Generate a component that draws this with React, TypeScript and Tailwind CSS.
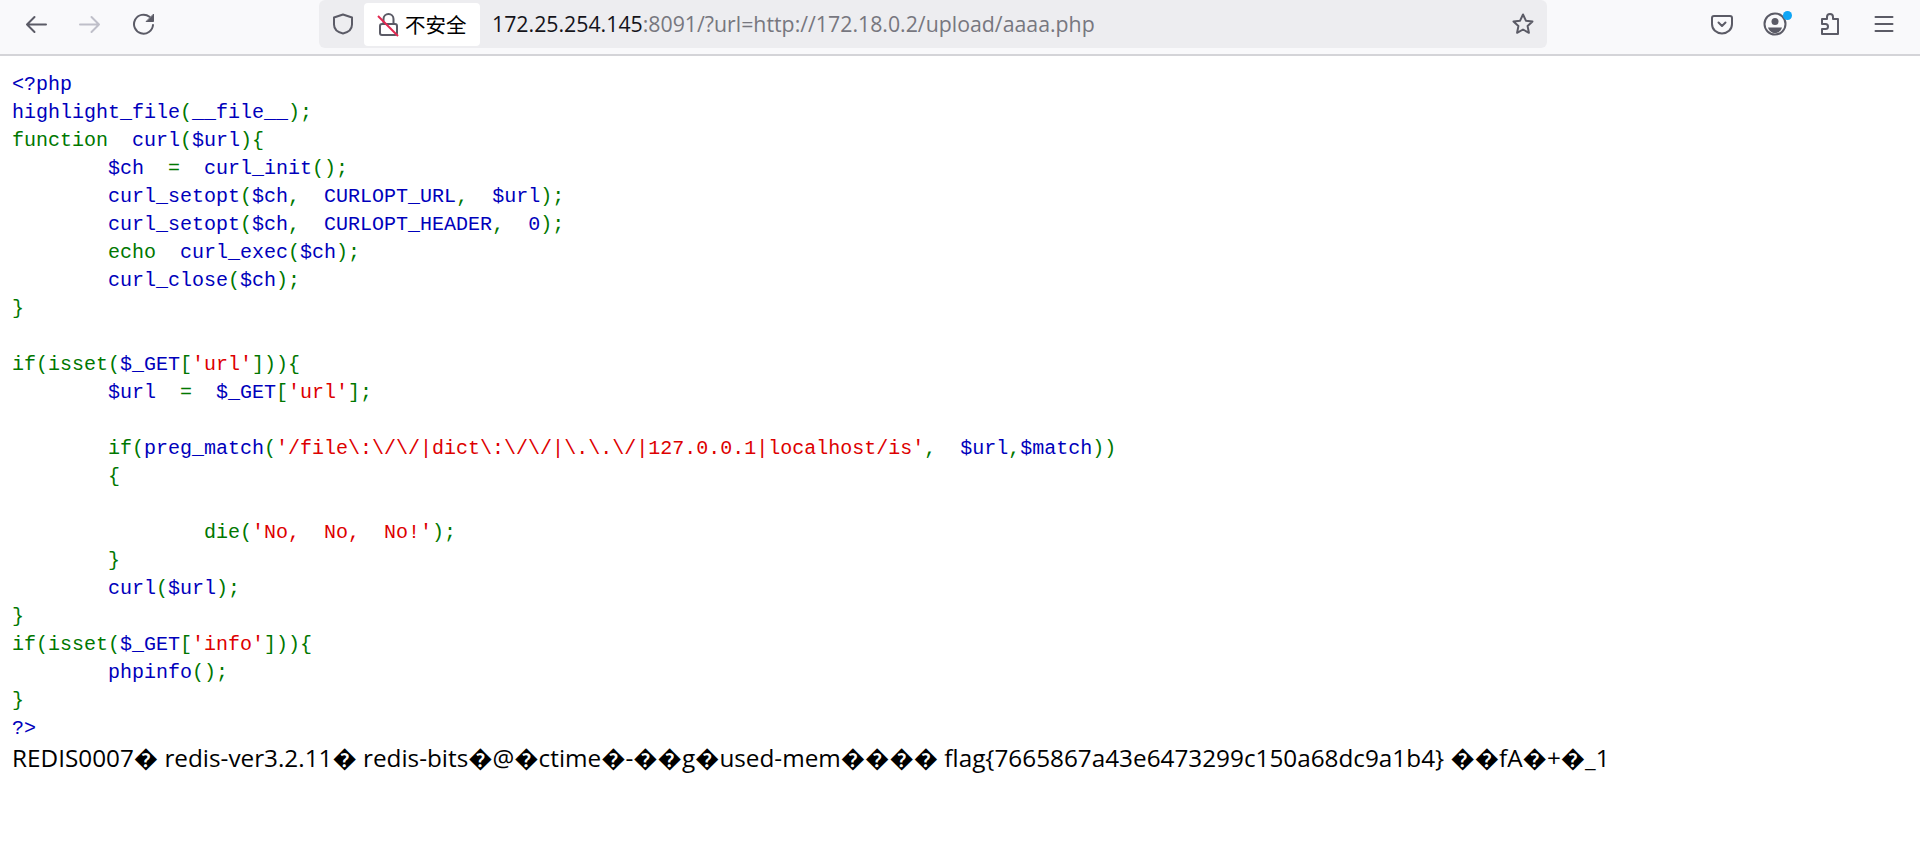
import React from 'react';

type Tone = 'b' | 'g' | 'r';
type Token = [Tone, string];

const toneClass: Record<Tone, string> = {
  b: 'text-[#0000bb]',
  g: 'text-[#007700]',
  r: 'text-[#dd0000]',
};

const tab = '\u00a0\u00a0\u00a0\u00a0\u00a0\u00a0\u00a0\u00a0';
const sp = '\u00a0\u00a0';

const code: Token[][] = [
  [['b', '<?php']],
  [['b', 'highlight_file'], ['g', '('], ['b', '__file__'], ['g', ');']],
  [['g', 'function' + sp], ['b', 'curl'], ['g', '('], ['b', '$url'], ['g', '){']],
  [['g', tab], ['b', '$ch' + sp], ['g', '=' + sp], ['b', 'curl_init'], ['g', '();']],
  [['g', tab], ['b', 'curl_setopt'], ['g', '('], ['b', '$ch'], ['g', ',' + sp], ['b', 'CURLOPT_URL'], ['g', ',' + sp], ['b', '$url'], ['g', ');']],
  [['g', tab], ['b', 'curl_setopt'], ['g', '('], ['b', '$ch'], ['g', ',' + sp], ['b', 'CURLOPT_HEADER'], ['g', ',' + sp], ['b', '0'], ['g', ');']],
  [['g', tab + 'echo' + sp], ['b', 'curl_exec'], ['g', '('], ['b', '$ch'], ['g', ');']],
  [['g', tab], ['b', 'curl_close'], ['g', '('], ['b', '$ch'], ['g', ');']],
  [['g', '}']],
  [],
  [['g', 'if(isset('], ['b', '$_GET'], ['g', '['], ['r', "'url'"], ['g', '])){']],
  [['g', tab], ['b', '$url' + sp], ['g', '=' + sp], ['b', '$_GET'], ['g', '['], ['r', "'url'"], ['g', '];']],
  [],
  [['g', tab + 'if('], ['b', 'preg_match'], ['g', '('], ['r', "'/file\\:\\/\\/|dict\\:\\/\\/|\\.\\.\\/|127.0.0.1|localhost/is'"], ['g', ',' + sp], ['b', '$url'], ['g', ','], ['b', '$match'], ['g', '))']],
  [['g', tab + '{']],
  [],
  [['g', tab + tab + 'die('], ['r', "'No," + sp + 'No,' + sp + "No!'"], ['g', ');']],
  [['g', tab + '}']],
  [['g', tab], ['b', 'curl'], ['g', '('], ['b', '$url'], ['g', ');']],
  [['g', '}']],
  [['g', 'if(isset('], ['b', '$_GET'], ['g', '['], ['r', "'info'"], ['g', '])){']],
  [['g', tab], ['b', 'phpinfo'], ['g', '();']],
  [['g', '}']],
  [['b', '?>']],
];

function Icon({ className, children }: { className: string; children: React.ReactNode }) {
  return (
    <svg viewBox="0 0 24 24" fill="none" stroke="currentColor" strokeWidth="2" strokeLinecap="round" strokeLinejoin="round" className={className}>
      {children}
    </svg>
  );
}

export default function App() {
  return (
    <div className="min-h-[852px] bg-white">
      {/* browser toolbar */}
      <div className="flex h-[56px] items-center border-b-2 border-[#d4d4d8] bg-[#f9f9fb] pb-[6px] pl-[24px] text-[#5b5b66]">
        <Icon className="h-6 w-6">
          <path d="M22 12.500H3M10.500 5l-7.500 7.500 7.500 7.500" />
        </Icon>
        <Icon className="ml-[30px] h-6 w-6 text-[#bfbfc9]">
          <path d="M2 12.500h19M13.500 5l7.500 7.500-7.500 7.500" />
        </Icon>
        <Icon className="ml-[30px] h-6 w-6">
          <path d="M21 13a9.500 9.500 0 1 1-3.500-8.200" />
          <path d="M21.500 2.500v7h-7z" fill="currentColor" strokeWidth="1" />
        </Icon>

        <div className="ml-[163px] flex h-[48px] w-[1228px] items-center rounded-[6px] bg-[#ededf0] pl-[12px] pr-[12px]">
          <Icon className="h-6 w-6">
            <path d="M12 2.500 3 5.500v7c0 4.500 4 7.800 9 9 5-1.200 9-4.500 9-9v-7z" />
          </Icon>
          <div className="ml-[9px] flex h-[43px] w-[116px] items-center rounded-[4px] bg-white pl-[13px]">
            <svg viewBox="0 0 24 24" fill="none" className="h-6 w-6 shrink-0 overflow-visible">
              <path d="M6.500 12V7a5 5 0 0 1 10 0v5" stroke="#5b5b66" strokeWidth="2" />
              <rect x="3" y="12" width="17" height="11" rx="2" stroke="#5b5b66" strokeWidth="2" />
              <path d="M1 4l20 20" stroke="#e22850" strokeWidth="2" />
            </svg>
            <span className="ml-[4px] font-['Noto_Sans_CJK_SC',sans-serif] text-[20.500px] leading-none text-black">不安全</span>
          </div>
          <div className="ml-[12px] flex-1 font-['Open_Sans',sans-serif] text-[21.300px] text-[#77777f]">
            <span className="text-[#15141a]">172.25.254.145</span>:8091/?url=http://172.18.0.2/upload/aaaa.php
          </div>
          <Icon className="h-6 w-6">
            <path d="m12 2.500 2.900 6.200 6.600.8-4.900 4.600 1.300 6.700-5.900-3.300-5.900 3.300 1.300-6.700-4.900-4.600 6.600-.8z" />
          </Icon>
        </div>

        <Icon className="ml-[163px] h-6 w-6">
          <path d="M4 4h16a2 2 0 0 1 2 2v6c0 5.500-4.500 9.500-10 9.500S2 17.500 2 12V6a2 2 0 0 1 2-2z" />
          <path d="m8.500 10.500 3.500 3.500 3.500-3.500" />
        </Icon>
        <div className="relative ml-[29px] h-6 w-6">
          <svg viewBox="0 0 24 24" fill="none" className="h-6 w-6">
            <circle cx="12" cy="12" r="10.500" stroke="#5b5b66" strokeWidth="2" />
            <circle cx="12" cy="9.500" r="3.500" fill="#5b5b66" />
            <path d="M5 15.500h14c-1 3.500-4 5.500-7 5.500s-6-2-7-5.500z" fill="#5b5b66" />
          </svg>
          <span className="absolute right-[-5px] top-[-1px] h-[9px] w-[9px] rounded-full bg-[#0ea5f5]" />
        </div>
        <Icon className="ml-[31px] h-6 w-6">
          <path d="M4 17h3.500a2.500 2.500 0 0 0 0-5H4V7h5V5a3 3 0 0 1 6 0v2h5v15H4z" />
        </Icon>
        <Icon className="ml-[30px] h-6 w-6">
          <path d="M3.500 5h17M3.500 12h17M3.500 19h17" />
        </Icon>
      </div>

      {/* highlighted source */}
      <div className="pl-[12px] pt-[15px]">
        {code.map((line, i) => (
          <div key={i} className="h-[28px] whitespace-pre font-['Liberation_Mono',monospace] text-[20px] leading-[28px]">
            {line.map(([tone, text], j) => (
              <span key={j} className={toneClass[tone]}>{text}</span>
            ))}
          </div>
        ))}
        <div className="font-['Open_Sans',sans-serif] text-[24.300px] leading-[30px] text-black">
          REDIS0007� redis-ver3.2.11� redis-bits�@�ctime�-��g�used-mem���� flag{'{'}7665867a43e6473299c150a68dc9a1b4{'}'} ��fA�+�_1
        </div>
      </div>
    </div>
  );
}
